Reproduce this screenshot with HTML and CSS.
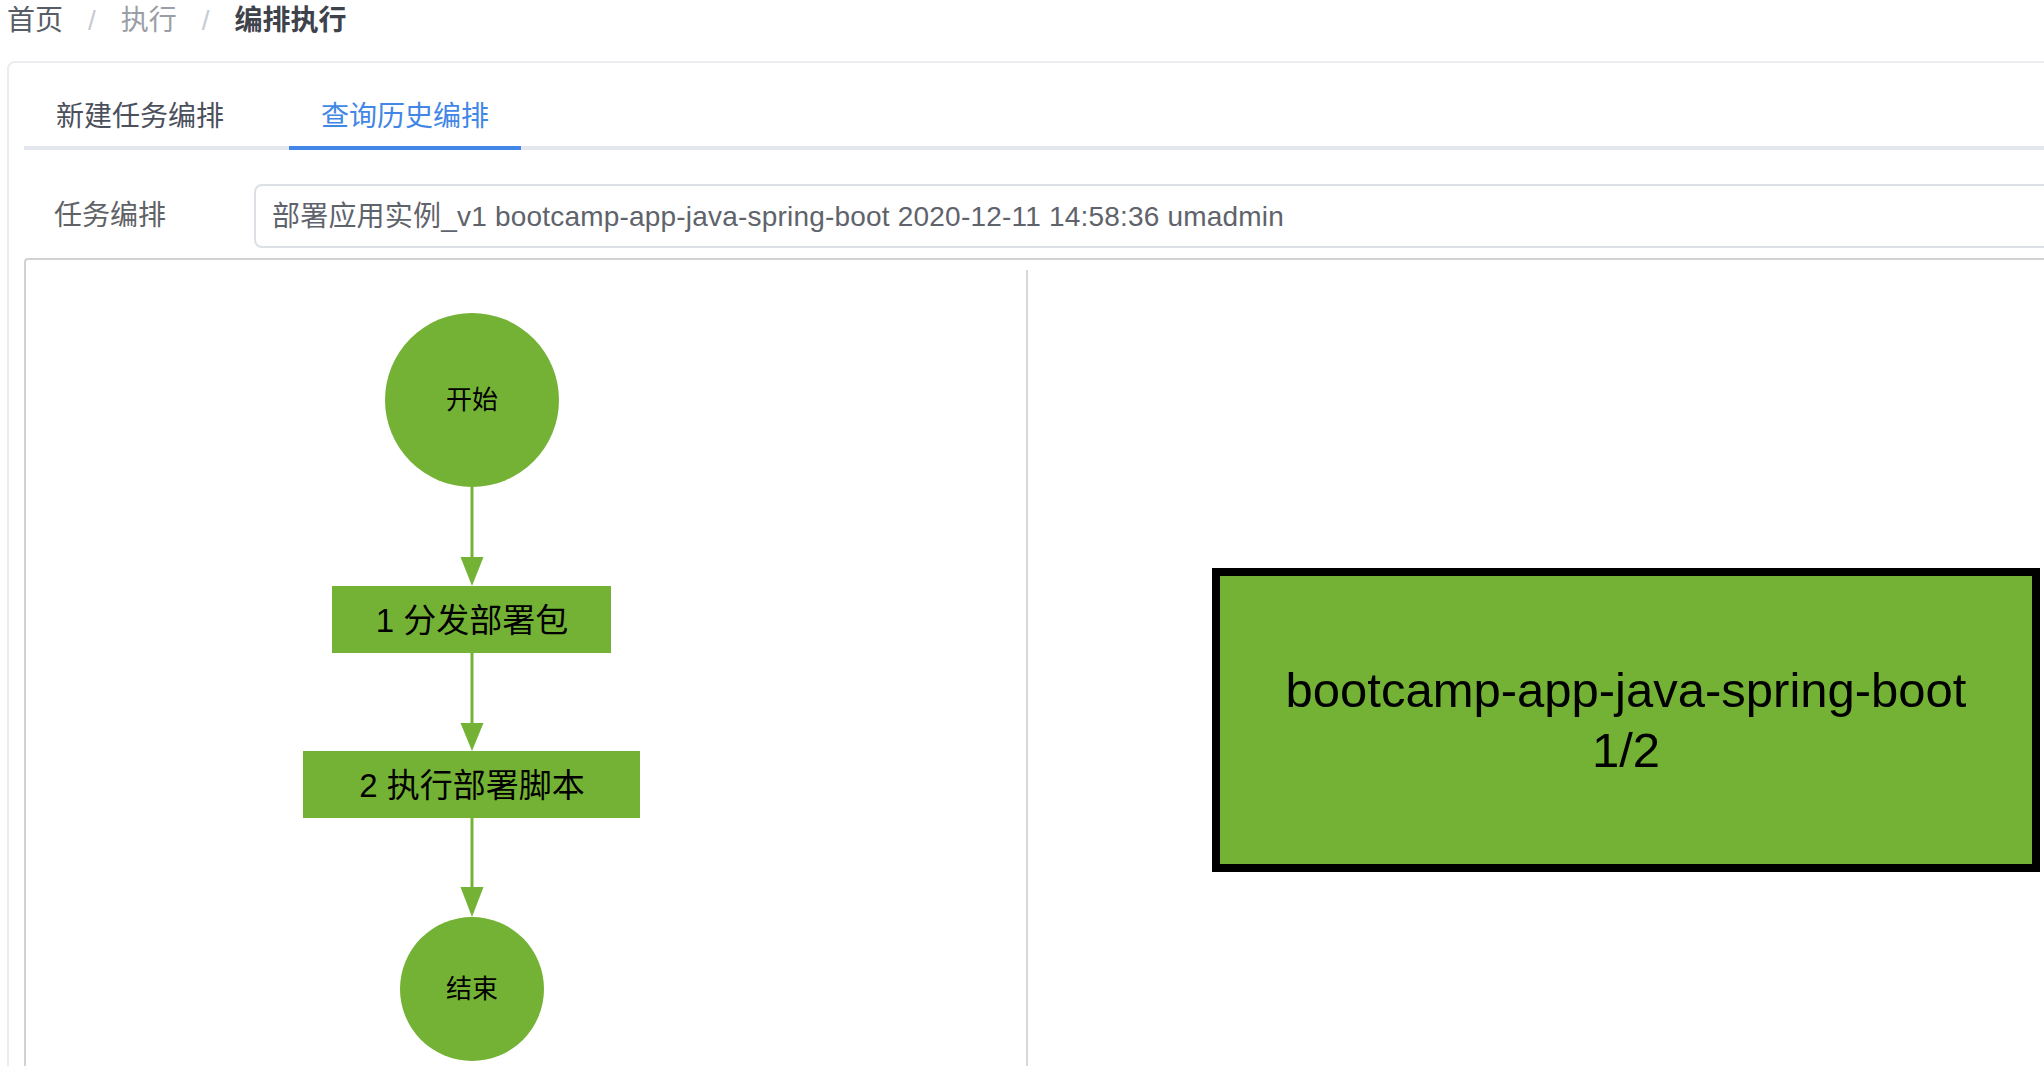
FILE: index.html
```html
<!DOCTYPE html>
<html lang="zh">
<head>
<meta charset="utf-8">
<title>编排执行</title>
<link rel="stylesheet" href="styles.css">
</head>
<body>
<div class="page">
  <nav class="breadcrumb">
    <span class="bc-item bc-home">首页</span><span class="bc-sep">/</span><span class="bc-item bc-mid">执行</span><span class="bc-sep">/</span><span class="bc-item bc-current">编排执行</span>
  </nav>
  <div class="card">
    <div class="tabs">
      <div class="tab">新建任务编排</div>
      <div class="tab active">查询历史编排</div>
    </div>
    <div class="form-row">
      <label class="form-label">任务编排</label>
      <div class="input">部署应用实例_v1 bootcamp-app-java-spring-boot 2020-12-11 14:58:36 umadmin</div>
    </div>
    <div class="graph-panel">
      <div class="flow-pane">
        <svg class="flow" width="1000" height="900" viewBox="0 0 1000 900">
          <circle class="node" cx="446" cy="140" r="87"/>
          <text class="label small" x="446" y="140">开始</text>
          <line class="edge" x1="446" y1="227" x2="446" y2="300"/>
          <polygon class="node" points="434.5,297 457.5,297 446,326"/>
          <rect class="node" x="306" y="326" width="279" height="67"/>
          <text class="label big" x="446" y="360">1 分发部署包</text>
          <line class="edge" x1="446" y1="393" x2="446" y2="466"/>
          <polygon class="node" points="434.5,463 457.5,463 446,491"/>
          <rect class="node" x="277" y="491" width="337" height="67"/>
          <text class="label big" x="446" y="525">2 执行部署脚本</text>
          <line class="edge" x1="446" y1="558" x2="446" y2="630"/>
          <polygon class="node" points="434.5,627 457.5,627 446,657"/>
          <circle class="node" cx="446" cy="729" r="72"/>
          <text class="label small" x="446" y="729">结束</text>
        </svg>
      </div>
      <div class="detail-pane">
        <div class="app-node">
          <span>bootcamp-app-java-spring-boot</span>
          <span>1/2</span>
        </div>
      </div>
    </div>
  </div>
</div>
</body>
</html>
```
FILE: styles.css
```css
html, body {
  margin: 0;
  padding: 0;
  overflow: hidden;
  background: #ffffff;
}
body {
  font-family: "Liberation Sans", "Noto Sans CJK SC", sans-serif;
}
.page {
  width: 2200px;
}
.breadcrumb {
  display: flex;
  height: 42px;
  line-height: 42px;
  padding-left: 7px;
  font-size: 28px;
}
.bc-home { color: #585c64; }
.bc-mid { color: #9a9ea6; }
.bc-current { color: #3e424b; font-weight: 700; }
.bc-sep {
  margin: 0 25px;
  color: #c8cbd1;
}
.card {
  margin: 19px 0 0 7px;
  border: 2px solid #ebecef;
  border-radius: 8px;
  padding: 19px 0 0 15px;
  height: 1100px;
}
.tabs {
  display: flex;
  gap: 33px;
  height: 64px;
  border-bottom: 4px solid #e4e7ed;
}
.tab {
  position: relative;
  height: 64px;
  line-height: 70px;
  padding: 0 32px;
  font-size: 28px;
  color: #4b505c;
}
.tab.active {
  color: #4287e5;
}
.tab.active::after {
  content: "";
  position: absolute;
  left: 0;
  right: 0;
  bottom: -4px;
  height: 4px;
  background: #4287e5;
}
.form-row {
  display: flex;
  align-items: center;
  margin-top: 34px;
}
.form-label {
  width: 230px;
  box-sizing: border-box;
  padding-left: 30px;
  font-size: 28px;
  line-height: 60px;
  padding-top: 0;
  color: #606266;
}
.input {
  flex: 1;
  height: 64px;
  box-sizing: border-box;
  border: 2px solid #dcdfe6;
  border-radius: 8px;
  padding-left: 16px;
  font-size: 28px;
  line-height: 62px;
  letter-spacing: 0.2px;
  color: #5f636b;
  white-space: nowrap;
}
.graph-panel {
  display: flex;
  margin-top: 10px;
  border: 2px solid #d4d1d1;
  border-radius: 4px;
  height: 900px;
}
.flow-pane {
  width: 1000px;
  flex: none;
}
.flow {
  display: block;
}
.node {
  fill: #74b236;
}
.edge {
  stroke: #74b236;
  stroke-width: 3;
}
.label {
  font-family: "Liberation Sans", "Noto Sans CJK SC", sans-serif;
  fill: #000000;
  text-anchor: middle;
  dominant-baseline: central;
}
.label.small { font-size: 26px; }
.label.big { font-size: 33px; }
.detail-pane {
  flex: 1;
  margin-top: 10px;
  border-left: 2px solid #d7d7d7;
  padding: 298px 0 0 184px;
}
.app-node {
  width: 828px;
  height: 304px;
  box-sizing: border-box;
  border: 8px solid #000000;
  background: #74b236;
  display: flex;
  flex-direction: column;
  align-items: center;
  justify-content: center;
  font-family: "Liberation Sans", sans-serif;
  font-size: 49px;
  line-height: 60px;
  color: #000000;
  text-align: center;
}
```
